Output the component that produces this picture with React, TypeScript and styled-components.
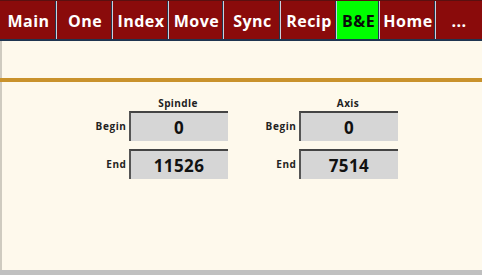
import styled, { createGlobalStyle } from "styled-components";

const GlobalStyle = createGlobalStyle`
    html, body {
        margin: 0;
        padding: 0;
        background: #c0c0c0;
    }
    * {
        box-sizing: border-box;
    }
`;

const tabs = ["Main", "One", "Index", "Move", "Sync", "Recip", "B&E", "Home", "..."];
const tabWidths = [57, 56, 56, 55, 57, 56, 43, 56, 46];

const fields = [
    { title: "Spindle", begin: "0", end: "11526" },
    { title: "Axis", begin: "0", end: "7514" },
];

export default function App() {
    return (
        <>
            <GlobalStyle />
            <Screen>
                <TabBar>
                    {tabs.map((tab, idx) => (
                        <Tab key={tab} $active={tab === "B&E"} $width={tabWidths[idx]}>
                            {tab}
                        </Tab>
                    ))}
                </TabBar>
                <Spacer />
                <GoldRule />
                <FieldRow>
                    {fields.map((field) => (
                        <FieldGroup key={field.title}>
                            <span />
                            <Title>{field.title}</Title>
                            <Label>Begin</Label>
                            <ValueBox>{field.begin}</ValueBox>
                            <Label>End</Label>
                            <ValueBox>{field.end}</ValueBox>
                        </FieldGroup>
                    ))}
                </FieldRow>
            </Screen>
        </>
    );
}

const Screen = styled.div`
    width: 482px;
    height: 270px;
    background: #fef9ec;
    border-left: 2px solid #cfcbc0;
    display: flex;
    flex-direction: column;
    font-family: "Open Sans", "Liberation Sans", sans-serif;
`;

const TabBar = styled.nav`
    display: flex;
    height: 41px;
    margin-left: -2px;
    border-bottom: 2px solid #1f3550;
    background: #8a0b0b;
`;

const Tab = styled.div<{ $active: boolean; $width: number }>`
    width: ${({ $width }) => $width}px;
    flex: none;
    display: flex;
    align-items: center;
    justify-content: center;
    padding-top: 1px;
    background: ${({ $active }) => ($active ? "#00ff00" : "#8a0b0b")};
    color: ${({ $active }) => ($active ? "#0a0a0a" : "#ffffff")};
    font-size: 16px;
    font-weight: 700;
    letter-spacing: 0.5px;
    border-top: 1px solid #5a1010;
    box-shadow: inset -1px 0 0 #c8d2de, inset -2px 0 0 #24344c;

    &:last-child {
        box-shadow: none;
    }
`;

const Spacer = styled.div`
    height: 37px;
`;

const GoldRule = styled.div`
    height: 4px;
    margin-left: -2px;
    background: #c9922c;
`;

const FieldRow = styled.div`
    display: flex;
    justify-content: center;
    gap: 31px;
    padding-top: 15px;
    padding-left: 2px;
`;

const FieldGroup = styled.div`
    display: grid;
    grid-template-columns: 40px 99px;
    grid-auto-rows: auto;
    row-gap: 8px;
    align-items: center;

    & > :nth-child(2) {
        margin-bottom: -6px;
    }
`;

const Title = styled.div`
    text-align: center;
    font-size: 10px;
    font-weight: 700;
    color: #222;
    line-height: 12px;
    letter-spacing: 0.4px;
`;

const Label = styled.div`
    text-align: right;
    padding-right: 2px;
    font-size: 10px;
    font-weight: 700;
    color: #222;
    letter-spacing: 0.6px;
`;

const ValueBox = styled.div`
    height: 30px;
    display: flex;
    align-items: center;
    justify-content: center;
    background: #d6d6d6;
    border-top: 2px solid #444;
    border-left: 2px solid #555;
    font-size: 17px;
    font-weight: 700;
    color: #111;
    letter-spacing: 0.4px;
`;
